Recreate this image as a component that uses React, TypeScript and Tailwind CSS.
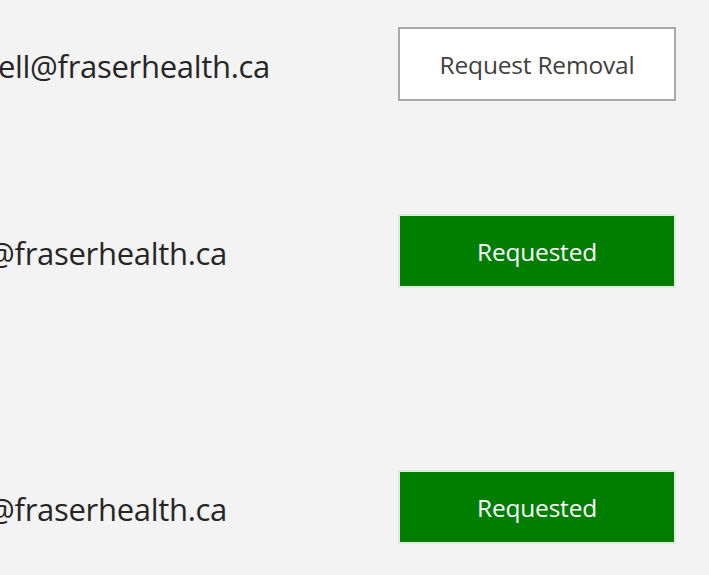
const rows = [
  { email: "michelle.odell@fraserhealth.ca", status: "open", pad: "pr-[128px]", mt: "mt-[27px]" },
  { email: "d.singh@fraserhealth.ca", status: "requested", pad: "pr-[171px]", mt: "mt-[113px]" },
  { email: "a.wong@fraserhealth.ca", status: "requested", pad: "pr-[171px]", mt: "mt-[182px]" },
];

export default function App() {
  return (
    <div
      className="w-[709px] h-[575px] overflow-hidden bg-[#f3f3f3]"
      style={{ fontFamily: '"Open Sans", "Noto Sans", sans-serif' }}
    >
      {rows.map((r) => (
        <div key={r.email} className={`flex items-center ${r.mt}`}>
          <div className={`w-[398px] shrink-0 flex justify-end ${r.pad}`}>
            <span className="whitespace-nowrap text-[31px] text-[#262626] leading-none pt-[4px] tracking-[-0.3px]">
              {r.email}
            </span>
          </div>
          {r.status === "open" ? (
            <button className="w-[278px] h-[74px] pt-[3px] border-2 border-[#a8a8a8] bg-white text-[24.5px] text-[#404040] tracking-[-0.2px]">
              Request Removal
            </button>
          ) : (
            <button className="w-[278px] h-[74px] pt-[2px] border-2 border-[#e6e6e6] bg-[#007e00] text-[24.5px] text-white tracking-[-0.2px]">
              Requested
            </button>
          )}
        </div>
      ))}
    </div>
  );
}
